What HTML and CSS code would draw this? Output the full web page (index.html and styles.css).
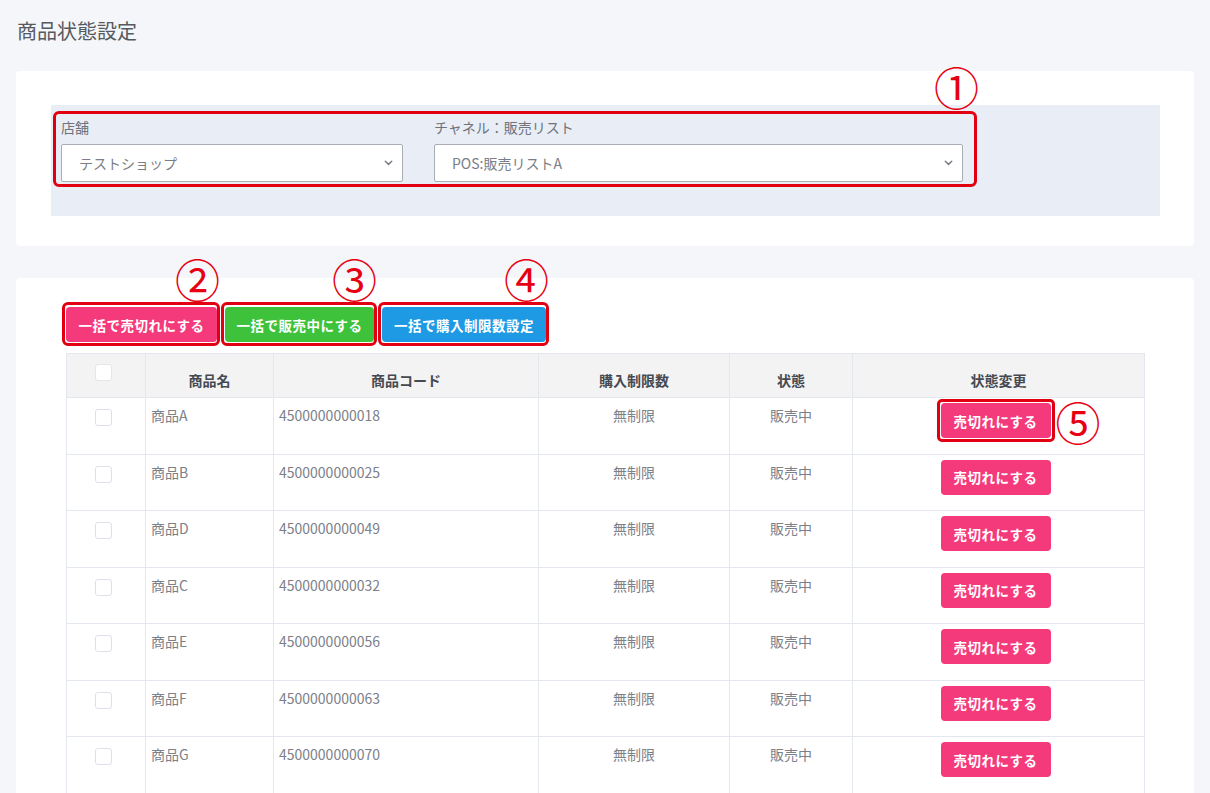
FILE: index.html
```html
<!DOCTYPE html>
<html lang="ja">
<head>
<meta charset="utf-8">
<title>商品状態設定</title>
<link rel="stylesheet" href="styles.css">
</head>
<body>
<div class="page">
  <h1 class="title">商品状態設定</h1>

  <section class="card card-filter">
    <div class="filter-box">
      <div class="anno anno-filter">
        <span class="num num-1">①</span>
        <div class="field field-shop">
          <div class="label">店舗</div>
          <div class="select">
            <span>テストショップ</span>
            <svg class="chev" width="9" height="6" viewBox="0 0 9 6"><path d="M1.3 1.3 4.5 4.4 7.7 1.3" fill="none" stroke="#7a7e86" stroke-width="1.5" stroke-linecap="round" stroke-linejoin="round"/></svg>
          </div>
        </div>
        <div class="field field-channel">
          <div class="label">チャネル：販売リスト</div>
          <div class="select">
            <span>POS:販売リストA</span>
            <svg class="chev" width="9" height="6" viewBox="0 0 9 6"><path d="M1.3 1.3 4.5 4.4 7.7 1.3" fill="none" stroke="#7a7e86" stroke-width="1.5" stroke-linecap="round" stroke-linejoin="round"/></svg>
          </div>
        </div>
      </div>
    </div>
  </section>

  <section class="card card-list">
    <div class="bulk-row">
      <span class="anno anno-btn"><span class="num num-top">②</span><button class="btn btn-pink btn-bulk btn-w1">一括で売切れにする</button></span>
      <span class="anno anno-btn"><span class="num num-top">③</span><button class="btn btn-green btn-bulk btn-w2">一括で販売中にする</button></span>
      <span class="anno anno-btn"><span class="num num-top">④</span><button class="btn btn-blue btn-bulk btn-w3">一括で購入制限数設定</button></span>
    </div>

    <table class="items">
      <colgroup>
        <col class="c-check"><col class="c-name"><col class="c-code"><col class="c-limit"><col class="c-state"><col class="c-change">
      </colgroup>
      <thead>
        <tr>
          <th class="td-check"><span class="cb cb-head"></span></th>
          <th>商品名</th>
          <th>商品コード</th>
          <th>購入制限数</th>
          <th>状態</th>
          <th>状態変更</th>
        </tr>
      </thead>
      <tbody>
        <tr>
          <td class="td-check"><span class="cb"></span></td>
          <td>商品A</td>
          <td>4500000000018</td>
          <td class="center">無制限</td>
          <td class="center">販売中</td>
          <td class="td-btn"><span class="anno anno-row"><button class="btn btn-pink btn-row">売切れにする</button><span class="num num-side">⑤</span></span></td>
        </tr>
        <tr>
          <td class="td-check"><span class="cb"></span></td>
          <td>商品B</td>
          <td>4500000000025</td>
          <td class="center">無制限</td>
          <td class="center">販売中</td>
          <td class="td-btn"><button class="btn btn-pink btn-row">売切れにする</button></td>
        </tr>
        <tr>
          <td class="td-check"><span class="cb"></span></td>
          <td>商品D</td>
          <td>4500000000049</td>
          <td class="center">無制限</td>
          <td class="center">販売中</td>
          <td class="td-btn"><button class="btn btn-pink btn-row">売切れにする</button></td>
        </tr>
        <tr>
          <td class="td-check"><span class="cb"></span></td>
          <td>商品C</td>
          <td>4500000000032</td>
          <td class="center">無制限</td>
          <td class="center">販売中</td>
          <td class="td-btn"><button class="btn btn-pink btn-row">売切れにする</button></td>
        </tr>
        <tr>
          <td class="td-check"><span class="cb"></span></td>
          <td>商品E</td>
          <td>4500000000056</td>
          <td class="center">無制限</td>
          <td class="center">販売中</td>
          <td class="td-btn"><button class="btn btn-pink btn-row">売切れにする</button></td>
        </tr>
        <tr>
          <td class="td-check"><span class="cb"></span></td>
          <td>商品F</td>
          <td>4500000000063</td>
          <td class="center">無制限</td>
          <td class="center">販売中</td>
          <td class="td-btn"><button class="btn btn-pink btn-row">売切れにする</button></td>
        </tr>
        <tr>
          <td class="td-check"><span class="cb"></span></td>
          <td>商品G</td>
          <td>4500000000070</td>
          <td class="center">無制限</td>
          <td class="center">販売中</td>
          <td class="td-btn"><button class="btn btn-pink btn-row">売切れにする</button></td>
        </tr>
      </tbody>
    </table>
  </section>
</div>
</body>
</html>
```

FILE: styles.css
```css
* { box-sizing: border-box; }

html, body {
  margin: 0;
  padding: 0;
}

body {
  background: #f4f6fa;
  font-family: "Noto Sans CJK JP", "Noto Sans", sans-serif;
  color: #6f737b;
  font-size: 14px;
}

.page {
  padding: 17px 16px 0 16px;
}

.title {
  margin: 0;
  font-size: 20px;
  line-height: 28px;
  font-weight: 400;
  color: #555a60;
  padding-left: 1px;
}

.card {
  background: #ffffff;
  border-radius: 4px;
}

.card-filter {
  margin-top: 26px;
  padding: 34px 34px 30px 35px;
}

.filter-box {
  background: #e9edf5;
  height: 111px;
  padding: 6px 0 0 2px;
}

.anno {
  position: relative;
  border: 3px solid #e00012;
  border-radius: 6px;
}

.num {
  position: absolute;
  color: #e60012;
  font-size: 45px;
  line-height: 45px;
  font-weight: 400;
  font-family: "Noto Sans CJK JP", sans-serif;
  white-space: nowrap;
}

.anno-filter {
  display: inline-flex;
  gap: 31px;
  padding: 3px 11px 0 5px;
  height: 76px;
}

.num-1 {
  right: -5px;
  top: -50px;
}

.label {
  font-size: 14px;
  line-height: 20px;
  color: #6f737b;
  margin-bottom: 7px;
}

.select {
  display: flex;
  align-items: center;
  justify-content: space-between;
  height: 38px;
  background: #fff;
  border: 1px solid #a9adb6;
  border-radius: 2px;
  padding: 0 9px 0 17px;
  font-size: 14px;
  color: #7a7e86;
}

.field-shop .select { width: 342px; }
.field-channel .select { width: 529px; }

.card-list {
  margin-top: 32px;
  padding: 24px 51px 40px 50px;
}

.bulk-row {
  display: flex;
  gap: 1px;
  margin-left: -4px;
  height: 44px;
}

.anno-btn {
  display: inline-block;
  padding: 2px 0 1px 1px;
  border-radius: 6px;
}

.num-top {
  right: -3px;
  top: -49px;
}

.btn {
  border: none;
  color: #fff;
  font-family: "Noto Sans CJK JP", sans-serif;
  font-size: 13.5px;
  font-weight: 700;
  letter-spacing: 0.5px;
  border-radius: 4px;
  cursor: pointer;
  padding: 0;
  text-align: center;
}

.btn-bulk {
  height: 35px;
  padding: 0;
  display: block;
}

.btn-w1 { width: 151px; }
.btn-w2 { width: 149px; }
.btn-w3 { width: 164px; }

.btn-pink { background: #f53a7b; }
.btn-green { background: #3ec23c; }
.btn-blue { background: #1d9ae3; }

.items {
  margin-top: 7px;
  width: 1078px;
  border-collapse: collapse;
  table-layout: fixed;
}

.c-check { width: 79px; }
.c-name { width: 128px; }
.c-code { width: 265px; }
.c-limit { width: 191px; }
.c-state { width: 123px; }
.c-change { width: 292px; }

.items th,
.items td {
  border: 1px solid #e4e8ee;
  vertical-align: top;
  font-size: 14px;
  line-height: 20px;
}

.items th {
  background: #f3f3f3;
  height: 44px;
  padding: 16px 5px 0;
  font-weight: 700;
  color: #454a52;
  text-align: center;
}

.items td {
  height: 56.5px;
  padding: 7px 5px 0;
  color: #7c8089;
}

.items td.center { text-align: center; }

.items .td-check {
  text-align: center;
  padding: 11px 5px 0 0;
}

.items th.td-check { padding-top: 10px; }

.cb {
  display: inline-block;
  width: 17px;
  height: 17px;
  border: 1px solid #dde1e7;
  border-radius: 3px;
  background: #fff;
  vertical-align: top;
}

.cb-head {
  border-color: #e3e6ea;
}

.items .td-btn {
  text-align: center;
  padding: 5px 6px 0 0;
}

.btn-row {
  width: 110px;
  height: 35px;
  vertical-align: top;
}

.anno-row {
  display: inline-block;
  padding: 1px;
  margin: -4px;
  border-radius: 5px;
}

.num-side {
  left: calc(100% + 4px);
  top: -3px;
}
```
